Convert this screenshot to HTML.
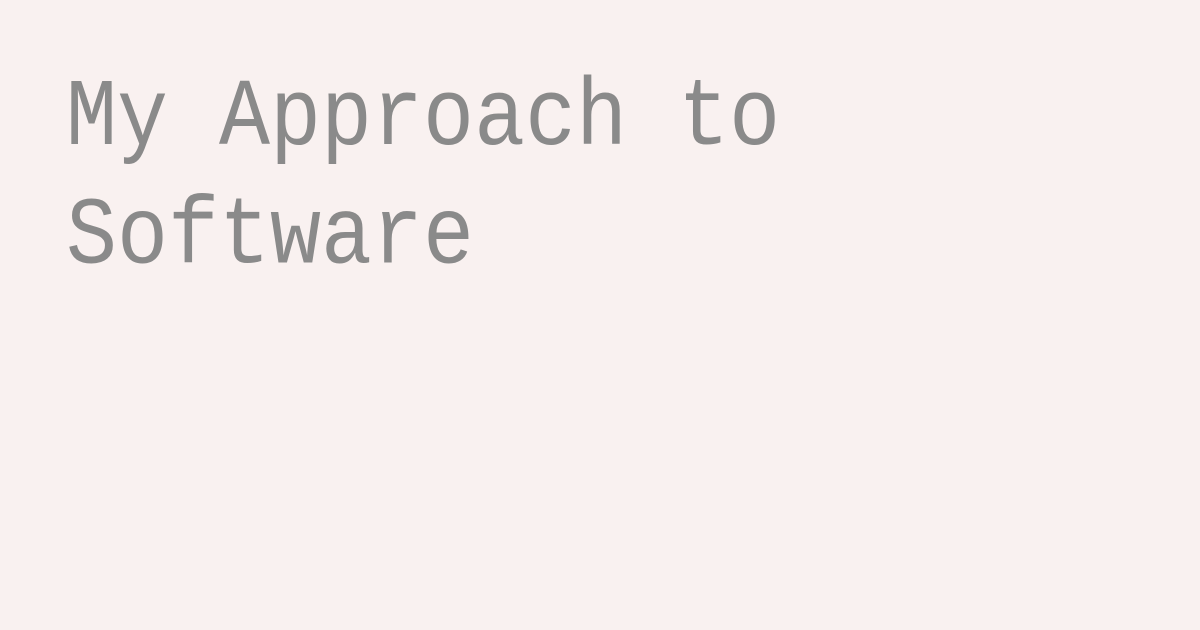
<!DOCTYPE html>
<html><head><style>
html,body{margin:0;width:1200px;height:630px;background:#f9f1f0;overflow:hidden}
.t{position:absolute;left:66px;top:0;font-family:"Liberation Mono",monospace;font-size:85px;color:#8a8a8a;line-height:106px;white-space:pre;transform-origin:0 0;transform:scaleY(1.12)}
</style></head><body>
<div class="t" style="top:60px">My Approach to
Software</div>
</body></html>
